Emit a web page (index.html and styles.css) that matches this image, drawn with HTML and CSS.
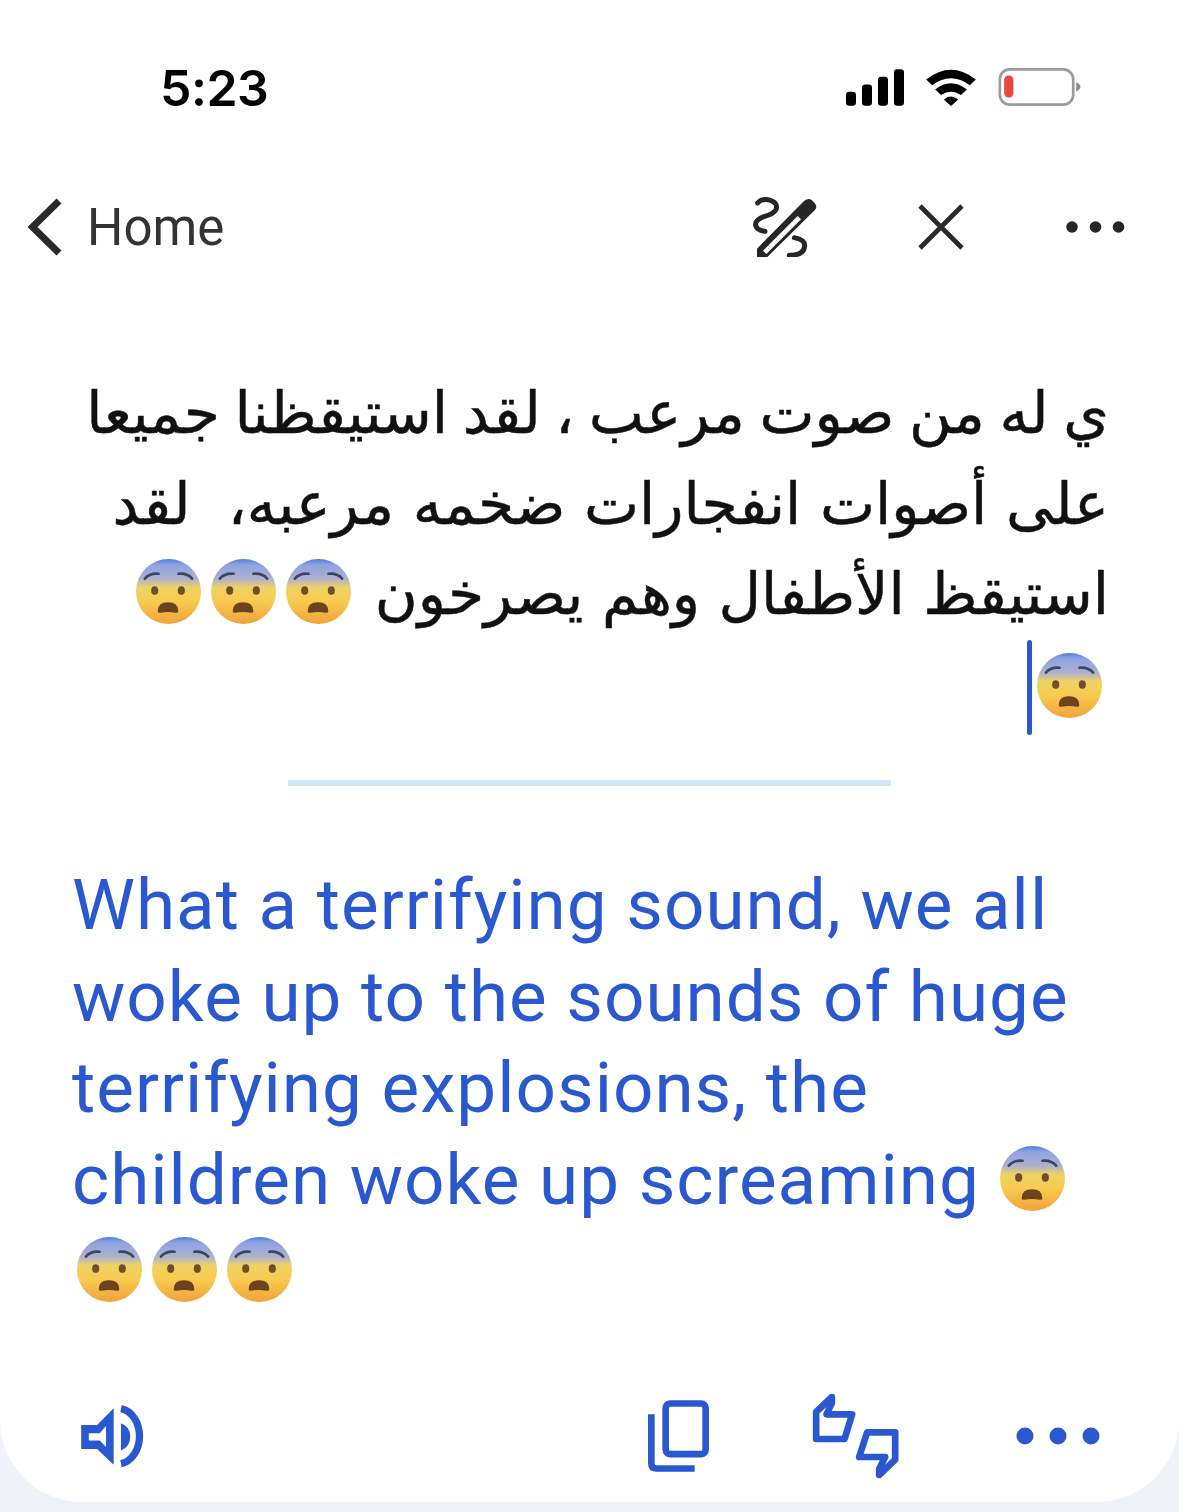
FILE: index.html
```html
<!DOCTYPE html>
<html lang="en">
<head>
<meta charset="utf-8">
<title>Translate</title>
<link rel="stylesheet" href="styles.css">
</head>
<body>
<svg class="defs" width="0" height="0" aria-hidden="true">
  <defs>
    <linearGradient id="face" x1="0" y1="0" x2="0" y2="1">
      <stop offset="0" stop-color="#4f7fdc"/>
      <stop offset=".09" stop-color="#8ea3e2"/>
      <stop offset=".3" stop-color="#adb0cf"/>
      <stop offset=".44" stop-color="#eed266"/>
      <stop offset=".65" stop-color="#f9cb50"/>
      <stop offset="1" stop-color="#f0a23a"/>
    </linearGradient>
    <symbol id="fear" viewBox="0 0 68 68">
      <circle cx="34" cy="34" r="33" fill="url(#face)"/>
      <path d="M10 21Q15 15 24 16M58 21Q53 15 44 16" fill="none" stroke="#3a4668" stroke-width="2.600" stroke-linecap="round"/>
      <ellipse cx="20" cy="33" rx="3.600" ry="4.400" fill="#6e4f28"/>
      <ellipse cx="47" cy="33" rx="3.600" ry="4.400" fill="#6e4f28"/>
      <path d="M23 54Q23 45 33.500 45Q44 45 44 54Q44 56 41 55.500Q33.500 54 26 55.500Q23 56 23 54Z" fill="#6b431e"/>
    </symbol>
  </defs>
</svg>
<main class="card">
  <header class="status">
    <span class="time">5:23</span>
    <div class="status-icons">
      <svg class="ic-signal" viewBox="78 58 174 110"><rect x="78" y="126" width="30" height="42" rx="10"/><rect x="126" y="104" width="30" height="64" rx="10"/><rect x="174" y="81" width="30" height="87" rx="10"/><rect x="222" y="58" width="30" height="110" rx="10"/></svg>
      <svg class="ic-wifi" viewBox="320 55 150 112"><path d="M320 87Q395 28 470 87L452 104Q395 62 338 104Z"/><path d="M347 117Q395 80 443 117L425 134Q395 114 365 134Z"/><path d="M373 147Q395 130 417 147L395 167Z"/></svg>
      <svg class="ic-battery" viewBox="537 55 248 115"><rect x="541" y="59" width="222" height="107" rx="30" fill="none" stroke="#9b9b9b" stroke-width="8"/><rect x="554" y="78" width="28" height="66" rx="13" fill="#e8493a"/><path d="M772 97Q785 104 785 112Q785 120 772 127Z" fill="#8c8c8c"/></svg>
    </div>
  </header>

  <nav class="nav">
    <svg class="ic-back" viewBox="0 0 36 58"><path d="M32 3L5.500 29L32 55" fill="none" stroke="#2a2a2a" stroke-width="7"/></svg>
    <span class="home">Home</span>
    <svg class="ic-pen" viewBox="100 50 195 180">
      <path fill-rule="evenodd" fill="#262626" d="M112 230V205L250 65Q262 52 275 58L285 68Q295 80 285 90L143 230ZM130 211L140 221L244 117L234 107Z"/>
      <path d="M114 68Q125 55 145 58Q175 65 170 85Q165 100 135 108Q105 118 108 135Q112 150 136 153M224 172Q255 178 255 195Q255 225 209 225" fill="none" stroke="#262626" stroke-width="15" stroke-linecap="round"/>
    </svg>
    <svg class="ic-close" viewBox="0 0 46 46"><path d="M2 2L44 44M44 2L2 44" stroke="#2a2a2a" stroke-width="4.600" fill="none"/></svg>
    <svg class="ic-dots" viewBox="0 0 60 12"><circle cx="6" cy="6" r="5.800"/><circle cx="29.500" cy="6" r="5.800"/><circle cx="52.500" cy="6" r="5.800"/></svg>
  </nav>

  <section class="source" dir="rtl" lang="ar">
    <span class="tight">ي له من صوت مرعب ، لقد استيقظنا جميعا</span><br>
    على أصوات انفجارات ضخمه مرعبه،&nbsp; لقد<br>
    استيقظ الأطفال وهم يصرخون <svg class="emoji emoji-tail"><use href="#fear"/></svg><svg class="emoji"><use href="#fear"/></svg><svg class="emoji"><use href="#fear"/></svg><br>
    <svg class="emoji emoji-end"><use href="#fear"/></svg><span class="caret"></span>
  </section>

  <div class="rule"></div>

  <section class="result">
    What a terrifying sound, we all<br>
    woke up to the sounds of huge<br>
    terrifying explosions, the<br>
    children woke up screaming <svg class="emoji emoji-inline"><use href="#fear"/></svg><br>
    <svg class="emoji"><use href="#fear"/></svg><svg class="emoji"><use href="#fear"/></svg><svg class="emoji"><use href="#fear"/></svg>
  </section>

  <footer class="actions">
    <svg class="ic-speaker" viewBox="62 45 198 190"><path fill="#2a59cf" fill-rule="evenodd" d="M62 105H110L160 55V225L110 178H62ZM85 130V152H118L137 172V108L118 130Z"/><path fill="#2a59cf" d="M182 100Q210 110 210 140Q210 172 182 182Z"/><path fill="none" stroke="#2a59cf" stroke-width="22" d="M182 56A66 84 0 0 1 182 222"/></svg>
    <svg class="ic-copy" viewBox="85 60 183 215"><rect x="138" y="70" width="120" height="152" rx="14" fill="none" stroke="#2a59cf" stroke-width="20"/><path d="M95 102V250Q95 265 110 265H225" fill="none" stroke="#2a59cf" stroke-width="20"/></svg>
    <svg class="ic-thumbs" viewBox="575 40 260 258"><path d="M634 52L587 97V178H672L695 104H618L634 70Z" fill="none" stroke="#2a59cf" stroke-width="20" stroke-linejoin="round"/><path d="M776 286L824 240V158H740L716 232H794L776 268Z" fill="none" stroke="#2a59cf" stroke-width="20" stroke-linejoin="round"/></svg>
    <svg class="ic-more" viewBox="0 0 84 18"><circle cx="9" cy="9" r="8.500"/><circle cx="42" cy="9" r="8.500"/><circle cx="75" cy="9" r="8.500"/></svg>
  </footer>
</main>
</body>
</html>
```
FILE: styles.css
```css
* { box-sizing: border-box; }
html, body { margin: 0; padding: 0; }
body { width: 1179px; height: 1512px; background: #eff3f9; overflow: hidden; }
.defs { position: absolute; }
.card {
  width: 1179px;
  height: 1502px;
  background: #fff;
  border-radius: 0 0 82px 82px;
  display: flex;
  flex-direction: column;
}
svg { display: block; flex: none; }

.status {
  height: 176px;
  padding: 60px 98px 0 160px;
  display: flex;
  justify-content: space-between;
  align-items: flex-start;
}
.time {
  font: 600 50px/56px Inter, "Liberation Sans", sans-serif;
  color: #000;
  letter-spacing: -.5px;
}
.status-icons { display: flex; align-items: center; gap: 22px; margin-top: 8px; }
.ic-signal { width: 58px; height: 37px; }
.ic-wifi { width: 50px; height: 37px; }
.ic-battery { width: 83px; height: 38px; }

.nav {
  height: 102px;
  padding: 0 53px 0 27px;
  display: flex;
  align-items: center;
}
.ic-back { width: 36px; height: 58px; }
.home {
  margin-left: 24px;
  padding-top: 2px;
  font: 400 51px/60px Roboto, sans-serif;
  color: #333;
}
.ic-pen { width: 65px; height: 60px; margin-left: auto; }
.ic-close { width: 46px; height: 46px; margin-left: 100px; }
.ic-dots { width: 60px; height: 12px; margin-left: 102px; fill: #262626; }

.source {
  margin-top: 90px;
  padding: 0 70px 0 40px;
  font: 400 58.500px/90.500px "DejaVu Sans", sans-serif;
  -webkit-text-stroke: .5px #111;
  color: #111;
  height: 362px;
  white-space: nowrap;
}
.tight { word-spacing: -4px; }
.emoji {
  display: inline-block;
  width: 67px;
  height: 67px;
  margin: 0 4px;
  vertical-align: -11px;
}
.emoji-end { margin-right: 6px; }
.emoji-tail { margin-right: 4px; }
.caret {
  display: inline-block;
  width: 5px;
  height: 95px;
  background: #2a59cf;
  border-radius: 3px;
  vertical-align: -27px;
}
.rule {
  width: 603px;
  height: 6px;
  margin: 50px 0 0 288px;
  background: #cfe6f8;
}
.result {
  margin-top: 73px;
  padding-left: 72px;
  font: 400 71px/91.500px Roboto, sans-serif;
  letter-spacing: 1px;
  color: #2a59cf;
  white-space: nowrap;
}
.result .emoji { vertical-align: -8px; }
.result .emoji-inline { margin-left: 1px; }
.actions {
  margin-top: auto;
  padding: 0 79px 23px 81px;
  display: flex;
  align-items: center;
}
.ic-speaker { width: 66px; height: 63px; }
.ic-copy { width: 61px; height: 72px; margin-left: 501px; }
.ic-thumbs { width: 87px; height: 86px; margin-left: 103px; }
.ic-more { width: 84px; height: 18px; margin-left: auto; fill: #2a59cf; }
```
